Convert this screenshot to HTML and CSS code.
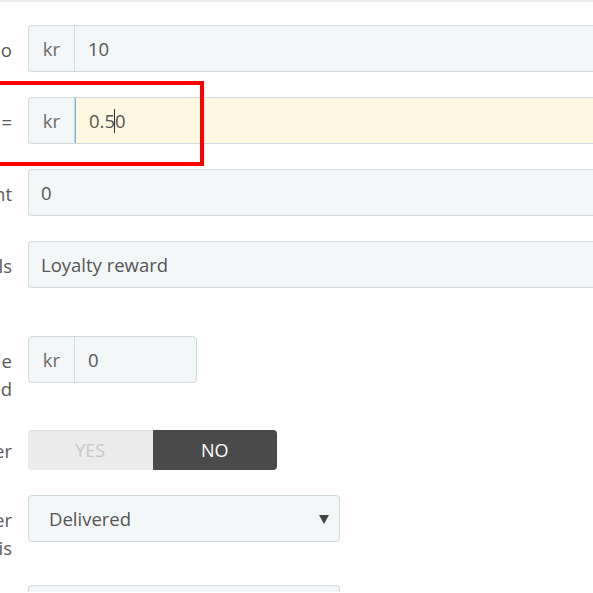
FILE: index.html
```html
<!DOCTYPE html>
<html lang="en">
<head>
<meta charset="utf-8">
<title>Loyalty settings</title>
<link rel="stylesheet" href="styles.css">
</head>
<body>
<div class="topbar"></div>
<form class="form">
  <div class="row">
    <label class="label">o</label>
    <div class="input-group wide">
      <span class="addon">kr</span>
      <span class="control">10</span>
    </div>
  </div>
  <div class="row">
    <label class="label">=</label>
    <div class="input-group wide">
      <span class="addon">kr</span>
      <span class="control focused">0.5<span class="caret"></span>0</span>
    </div>
  </div>
  <div class="row">
    <label class="label">nt</label>
    <div class="input-group wide">
      <span class="control plain">0</span>
    </div>
  </div>
  <div class="row row-spaced">
    <label class="label">ls</label>
    <div class="input-group wide">
      <span class="control plain">Loyalty reward</span>
    </div>
  </div>
  <div class="row row-tall">
    <label class="label">e<br>d</label>
    <div class="input-group short">
      <span class="addon">kr</span>
      <span class="control">0</span>
    </div>
  </div>
  <div class="row">
    <label class="label label-switch">er</label>
    <div class="switch">
      <span class="switch-opt">YES</span>
      <span class="switch-opt active">NO</span>
    </div>
  </div>
  <div class="row row-select">
    <label class="label">er<br>is</label>
    <div class="select">
      <span>Delivered</span>
      <span class="arrow"></span>
    </div>
  </div>
  <div class="row">
    <label class="label"></label>
    <div class="select select-cut"></div>
  </div>
  <div class="highlight"></div>
</form>
</body>
</html>
```

FILE: styles.css
```css
html, body {
  margin: 0;
  padding: 0;
  background: #fff;
  overflow: hidden;
  width: 593px;
  height: 593px;
}

body {
  font-family: "Open Sans", "DejaVu Sans", sans-serif;
  font-size: 18.5px;
  color: #555;
  position: relative;
}

.topbar {
  height: 2px;
  background: #ececec;
}

.form {
  margin: 23px 0 0 0;
  position: relative;
}

.row {
  display: grid;
  grid-template-columns: 12px auto;
  column-gap: 16px;
  align-items: start;
  margin-bottom: 25px;
}

.row-spaced {
  margin-bottom: 48px;
}

.row-tall {
  margin-bottom: 27px;
}

.row-select {
  margin-bottom: 23px;
}

.label {
  text-align: right;
  padding-top: 11px;
  line-height: 28px;
  color: #5a5a5a;
  white-space: nowrap;
  direction: rtl;
}

.label-switch {
  padding-top: 7px;
}

.input-group {
  display: flex;
  height: 47px;
  box-sizing: border-box;
  border: 1px solid #cfdbe0;
  border-radius: 4px;
  background: #f4f7f8;
  overflow: hidden;
}

.wide {
  width: 565px;
  border-right: 0;
  border-radius: 4px 0 0 4px;
}

.short {
  width: 169px;
}

.addon {
  width: 45px;
  flex: none;
  display: flex;
  align-items: center;
  justify-content: center;
  border-right: 1px solid #cfdbe0;
  color: #6b6b6b;
}

.control {
  flex: 1;
  display: flex;
  align-items: center;
  padding: 0 13px;
  color: #555;
}

.control.plain {
  padding-left: 12px;
}

.control.focused {
  background: #fef8e1;
  border: 1px solid #72b2e6;
  border-right: 0;
  margin: -1px 0 -1px 0;
}

.caret {
  display: inline-block;
  width: 1px;
  height: 24px;
  background: #333;
  margin: 0 -1px 0 0;
  position: relative;
  left: -1px;
}

.switch {
  display: flex;
  width: 249px;
  height: 40px;
  border-radius: 4px;
  overflow: hidden;
  background: #ececec;
  box-shadow: inset 0 1px 2px rgba(0,0,0,0.08);
}

.switch-opt {
  flex: 1;
  display: flex;
  align-items: center;
  justify-content: center;
  color: #c8c8c8;
  font-size: 18px;
}

.switch-opt.active {
  background: #4a4a4a;
  color: #fff;
}

.select {
  position: relative;
  width: 312px;
  height: 47px;
  box-sizing: border-box;
  border: 1px solid #cfdbe0;
  border-radius: 4px;
  background: #f4f7f8;
  display: flex;
  align-items: center;
  padding-left: 20px;
  color: #555;
}

.select-cut {
  height: 7px;
  border-bottom: 0;
  border-radius: 4px 4px 0 0;
}

.arrow {
  position: absolute;
  right: 10px;
  top: 19px;
  width: 0;
  height: 0;
  border-left: 5px solid transparent;
  border-right: 5px solid transparent;
  border-top: 9px solid #444;
}

.highlight {
  position: absolute;
  left: -28px;
  top: 56px;
  width: 224px;
  height: 77px;
  border: 4px solid #f00;
}
```
